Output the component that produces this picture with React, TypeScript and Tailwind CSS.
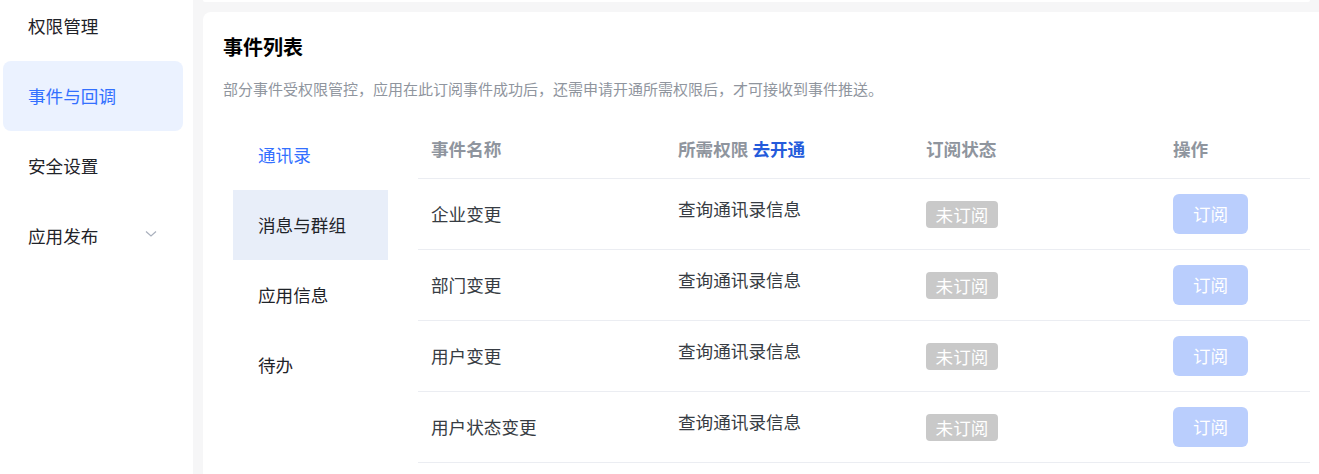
import React from "react";

const font = { fontFamily: '"Noto Sans CJK SC", "Noto Sans", sans-serif' };

const sideItems = [
  { label: "权限管理" },
  { label: "事件与回调", active: true },
  { label: "安全设置" },
  { label: "应用发布", chevron: true },
];

const tabs = [
  { label: "通讯录", selected: true },
  { label: "消息与群组", hover: true },
  { label: "应用信息" },
  { label: "待办" },
];

const rows = ["企业变更", "部门变更", "用户变更", "用户状态变更"];

export default function App() {
  return (
    <div
      className="flex h-[474px] w-[1319px] overflow-hidden bg-[#f6f6f7] text-[#1f2329]"
      style={font}
    >
      {/* Sidebar */}
      <aside className="w-[193px] shrink-0 bg-white">
        <ul className="-mt-[9px] flex flex-col">
          {sideItems.map((it) => (
            <li
              key={it.label}
              className={`ml-[3px] flex h-[70px] w-[180px] items-center rounded-[8px] pl-[25px] pr-[26px] text-[17.6px] ${
                it.active ? "bg-[#ebf2ff] text-[#3370ff]" : "text-[#1f2329]"
              }`}
            >
              <span className="flex-1">{it.label}</span>
              {it.chevron && (
                <svg width="12" height="8" viewBox="0 0 12 8" className="mt-[-4px]">
                  <polyline
                    points="1,1.5 6,6 11,1.5"
                    fill="none"
                    stroke="#a9b0bd"
                    strokeWidth="1.2"
                  />
                </svg>
              )}
            </li>
          ))}
        </ul>
      </aside>

      {/* Main */}
      <main className="flex flex-1 flex-col pl-[10px]">
        <div className="h-[2px] w-[1107px] rounded-b-[6px] bg-white" />
        <section className="mt-[10px] flex-1 rounded-tl-[8px] bg-white pl-[20px]">
          <h2 className="pt-[21px] text-[20px] font-bold leading-[28px] text-black">
            事件列表
          </h2>
          <p className="mt-[17px] text-[15px] leading-[22px] text-[#8f959e]">
            部分事件受权限管控，应用在此订阅事件成功后，还需申请开通所需权限后，才可接收到事件推送。
          </p>

          <div className="mt-[20px] flex">
            {/* Tabs */}
            <ul className="ml-[10px] w-[155px] shrink-0">
              {tabs.map((t) => (
                <li
                  key={t.label}
                  className={`flex h-[70px] items-center pl-[25px] text-[17.6px] ${
                    t.selected ? "text-[#3370ff]" : "text-[#1f2329]"
                  } ${t.hover ? "bg-[#e8eef9]" : ""}`}
                >
                  {t.label}
                </li>
              ))}
            </ul>

            {/* Table */}
            <div className="ml-[30px] w-[892px] shrink-0">
              <div className="grid h-[59px] grid-cols-[247px_247px_248px_150px] items-center border-b border-[#ebedf2] text-[17.6px] font-bold text-[#8f959e]">
                <div className="pl-[13px]">事件名称</div>
                <div className="pl-[13px]">
                  所需权限 <span className="text-[#245bdb]">去开通</span>
                </div>
                <div className="pl-[14px]">订阅状态</div>
                <div className="pl-[13px]">操作</div>
              </div>
              {rows.map((r) => (
                <div
                  key={r}
                  className="grid h-[71px] grid-cols-[247px_247px_248px_150px] border-b border-[#ebedf2] text-[17.6px] text-[#373c43]"
                >
                  <div className="flex items-center pl-[13px]">{r}</div>
                  <div className="flex items-center pb-[10px] pl-[13px]">查询通讯录信息</div>
                  <div className="flex items-center pl-[14px]">
                    <span className="h-[27px] rounded-[4px] bg-[#c9c9c9] px-[9.6px] text-[17.6px] leading-[27px] text-white">
                      未订阅
                    </span>
                  </div>
                  <div className="flex items-center pl-[13px]">
                    <button className="h-[40px] w-[75px] rounded-[6px] bg-[#bacefd] text-[17.6px] text-white">
                      订阅
                    </button>
                  </div>
                </div>
              ))}
            </div>
          </div>
        </section>
      </main>
    </div>
  );
}
